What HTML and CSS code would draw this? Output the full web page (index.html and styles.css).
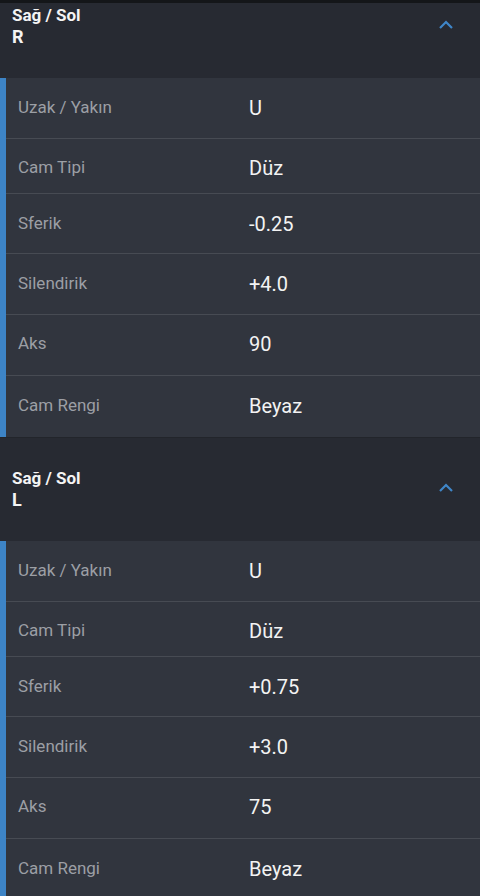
FILE: index.html
```html
<!DOCTYPE html>
<html lang="tr">
<head>
<meta charset="utf-8">
<link rel="stylesheet" href="styles.css">
</head>
<body>
<div class="topbar"></div>
<section class="group first">
  <div class="group-head">
    <div class="titles">
      <div class="t1">Sağ / Sol</div>
      <div class="t2">R</div>
    </div>
    <svg class="chev" width="16" height="10" viewBox="0 0 16 10"><path d="M2 8 L8 2 L14 8" fill="none" stroke="#3f86c8" stroke-width="2.2"/></svg>
  </div>
  <div class="rows">
    <div class="row r1"><span class="lbl">Uzak / Yakın</span><span class="val">U</span></div>
    <div class="row r2"><span class="lbl">Cam Tipi</span><span class="val">Düz</span></div>
    <div class="row r3"><span class="lbl">Sferik</span><span class="val">-0.25</span></div>
    <div class="row r4"><span class="lbl">Silendirik</span><span class="val">+4.0</span></div>
    <div class="row r5"><span class="lbl">Aks</span><span class="val">90</span></div>
    <div class="row r6"><span class="lbl">Cam Rengi</span><span class="val">Beyaz</span></div>
  </div>
</section>
<section class="group second">
  <div class="group-head">
    <div class="titles">
      <div class="t1">Sağ / Sol</div>
      <div class="t2">L</div>
    </div>
    <svg class="chev" width="16" height="10" viewBox="0 0 16 10"><path d="M2 8 L8 2 L14 8" fill="none" stroke="#3f86c8" stroke-width="2.2"/></svg>
  </div>
  <div class="rows">
    <div class="row r1"><span class="lbl">Uzak / Yakın</span><span class="val">U</span></div>
    <div class="row r2"><span class="lbl">Cam Tipi</span><span class="val">Düz</span></div>
    <div class="row r3"><span class="lbl">Sferik</span><span class="val">+0.75</span></div>
    <div class="row r4"><span class="lbl">Silendirik</span><span class="val">+3.0</span></div>
    <div class="row r5"><span class="lbl">Aks</span><span class="val">75</span></div>
    <div class="row r6"><span class="lbl">Cam Rengi</span><span class="val">Beyaz</span></div>
  </div>
</section>
</body>
</html>
```
FILE: styles.css
```css
* { box-sizing: border-box; }
html, body { margin: 0; padding: 0; }
body {
  width: 480px;
  height: 896px;
  overflow: hidden;
  background: #31353e;
  font-family: Roboto, "Noto Sans", sans-serif;
}
.topbar { height: 3px; background: #141619; }
.group-head {
  display: flex;
  justify-content: space-between;
  align-items: flex-start;
  background: #272a32;
  padding: 0 26px 0 12px;
}
.first .group-head { height: 75px; padding-top: 1px; }
.second .group-head { height: 104px; padding-top: 29px; border-top: 1px solid #22252b; }
.titles { color: #f4f4f4; font-weight: 700; font-size: 17px; line-height: 22px; }
.t2 { font-size: 18px; }
.chev { margin-top: 16px; }
.rows {
  border-left: 6px solid #3d84c6;
  background: #31353e;
}
.row {
  display: flex;
  align-items: center;
  border-bottom: 1px solid #474b53;
  padding-left: 12px;
}
.row:last-child { border-bottom: none; }
.r1 { height: 61px; }
.r2 { height: 55px; padding-top: 3px; }
.r3 { height: 60px; }
.r4 { height: 61px; }
.r5 { height: 61px; padding-bottom: 2px; }
.r6 { height: 61px; padding-bottom: 1px; }
.lbl {
  width: 231px;
  color: #9c9fa5;
  font-size: 17px;
  margin-top: -2px;
}
.val {
  color: #f3f3f3;
  font-size: 20px;
}
```
